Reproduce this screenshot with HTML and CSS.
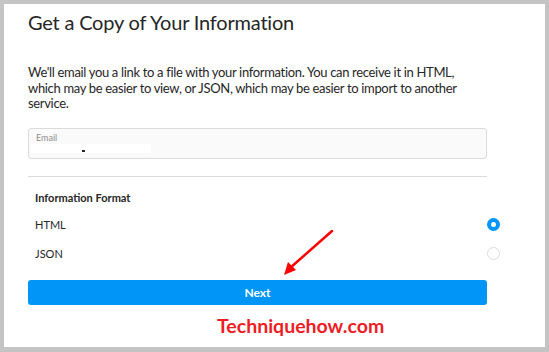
FILE: index.html
```html
<!DOCTYPE html>
<html lang="en">
<head>
  <meta charset="UTF-8">
  <title>Get a Copy of Your Information</title>
  <link rel="stylesheet" href="styles.css">
</head>
<body>
  <div class="panel">
    <h1 class="title">Get a Copy of Your Information</h1>
    <p class="intro">We'll email you a link to a file with your information. You can receive it in HTML, which may be easier to view, or JSON, which may be easier to import to another service.</p>

    <div class="email-box">
      <div class="email-label">Email</div>
      <div class="email-value"></div>
    </div>

    <hr class="divider">

    <div class="format-title">Information Format</div>
    <div class="options">
      <div class="option">
        <span>HTML</span>
        <span class="radio checked"></span>
      </div>
      <div class="option">
        <span>JSON</span>
        <span class="radio"></span>
      </div>
    </div>

    <button class="next-btn">Next</button>

    <div class="watermark">Techniquehow.com</div>

    <!-- стрелка поверх содержимого -->
    <svg class="arrow" width="60" height="52" viewBox="0 0 60 52">
      <line x1="56" y1="3" x2="14" y2="40" stroke="#ff0000" stroke-width="2.5" stroke-linecap="round"/>
      <polygon points="8,47 12,34 20,42" fill="#ff0000"/>
    </svg>
  </div>
</body>
</html>
```

FILE: styles.css
```css
* { box-sizing: border-box; }
html, body {
  margin: 0;
  padding: 0;
}
body {
  background: #c4c4c4;
  padding: 4px 4px 5px 4px;
  height: 352px;
  font-family: 'Lato', 'Open Sans', sans-serif;
  color: #262626;
}
.panel {
  position: relative;
  background: #ffffff;
  height: 343px;
  padding: 6px 58px 0 24px;
}
.title {
  margin: 0;
  font-size: 20px;
  font-weight: 400;
  line-height: 24px;
  letter-spacing: -0.2px;
}
.intro {
  margin: 31px 0 0 0;
  font-size: 13px;
  line-height: 15.5px;
  letter-spacing: -0.33px;
}
.email-box {
  margin-top: 16px;
  height: 31px;
  border: 1px solid #dbdbdb;
  border-radius: 3px;
  background: #fafafa;
  padding: 3px 0 0 2px;
}
.email-label {
  font-size: 9px;
  line-height: 11px;
  color: #8e8e8e;
  padding-left: 5px;
}
.email-value {
  position: relative;
  width: 120px;
  height: 9px;
  margin-top: 1px;
  background: #ffffff;
}
.email-value::after {
  content: "";
  position: absolute;
  left: 51px;
  top: 6px;
  width: 3px;
  height: 2px;
  background: #262626;
}
.divider {
  margin: 17px 0 0 0;
  border: none;
  border-top: 1px solid #dbdbdb;
}
.format-title {
  margin-top: 14px;
  padding-left: 7px;
  font-size: 11px;
  font-weight: 700;
  line-height: 14px;
}
.options {
  margin: 5px -13px 0 0;
}
.option {
  display: flex;
  justify-content: space-between;
  align-items: center;
  height: 29px;
  padding-left: 7px;
  font-size: 11px;
}
.radio {
  width: 13px;
  height: 13px;
  border-radius: 50%;
  border: 1.5px solid #dbdbdb;
  background: #fff;
}
.radio.checked {
  border: 4px solid #0095f6;
}
.next-btn {
  display: block;
  width: 100%;
  height: 25px;
  margin-top: 12px;
  border: none;
  border-radius: 3px;
  background: #0095f6;
  color: #ffffff;
  font-family: 'Lato', 'Open Sans', sans-serif;
  font-size: 12px;
  font-weight: 700;
}
.watermark {
  margin: 9px 0 0 189px;
  color: #ee1c25;
  font-size: 19.5px;
  font-weight: 700;
  line-height: 24px;
}
.arrow {
  position: absolute;
  left: 272px;
  top: 224px;
}
```
